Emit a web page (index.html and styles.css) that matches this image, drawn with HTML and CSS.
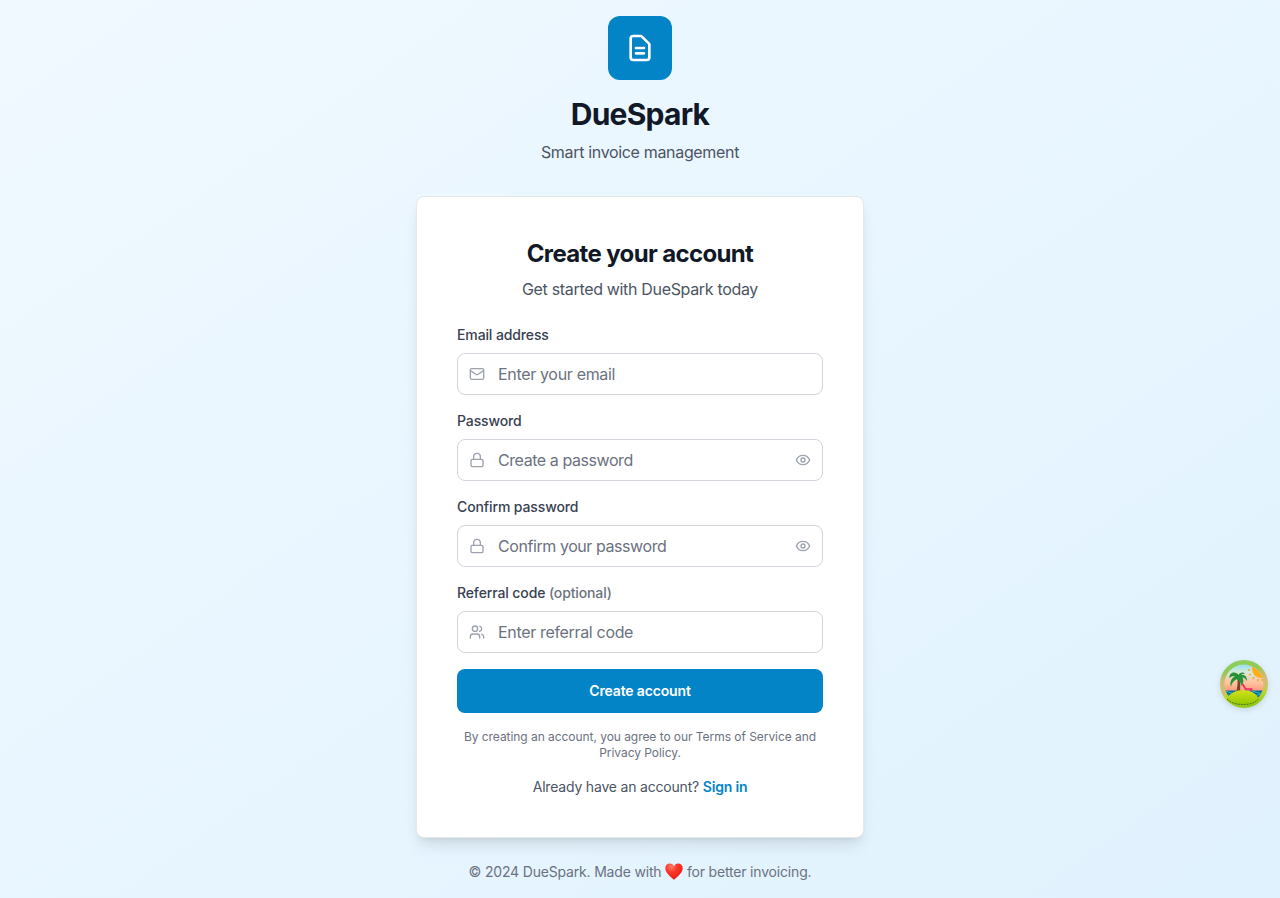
FILE: index.html
```html
<!DOCTYPE html>
<html lang="en">
<head>
<meta charset="utf-8">
<title>DueSpark</title>
<link rel="stylesheet" href="styles.css">
</head>
<body>
<main class="page">
  <header class="brand">
    <div class="logo">
      <svg class="logo-icon" viewBox="0 0 24 24"><path d="M9 12h6m-6 4h6m2 5H7a2 2 0 01-2-2V5a2 2 0 012-2h5.586a1 1 0 01.707.293l5.414 5.414a1 1 0 01.293.707V19a2 2 0 01-2 2z"/></svg>
    </div>
    <h1 class="brand-name">DueSpark</h1>
    <p class="tagline">Smart invoice management</p>
  </header>

  <section class="card">
    <h2 class="title">Create your account</h2>
    <p class="subtitle">Get started with DueSpark today</p>
    <form class="form">
      <div class="field">
        <label class="label" for="email">Email address</label>
        <div class="control">
          <svg class="icon" viewBox="0 0 24 24"><rect x="2" y="4" width="20" height="16" rx="2"/><path d="m22 7-8.97 5.7a1.94 1.94 0 0 1-2.06 0L2 7"/></svg>
          <input class="input" id="email" type="email" placeholder="Enter your email">
        </div>
      </div>
      <div class="field">
        <label class="label" for="password">Password</label>
        <div class="control">
          <svg class="icon" viewBox="0 0 24 24"><rect x="3" y="11" width="18" height="11" rx="2"/><path d="M7 11V7a5 5 0 0 1 10 0v4"/></svg>
          <input class="input input-secret" id="password" type="password" placeholder="Create a password">
          <svg class="icon" viewBox="0 0 24 24"><path d="M2 12s3-7 10-7 10 7 10 7-3 7-10 7-10-7-10-7Z"/><circle cx="12" cy="12" r="3"/></svg>
        </div>
      </div>
      <div class="field">
        <label class="label" for="confirm">Confirm password</label>
        <div class="control">
          <svg class="icon" viewBox="0 0 24 24"><rect x="3" y="11" width="18" height="11" rx="2"/><path d="M7 11V7a5 5 0 0 1 10 0v4"/></svg>
          <input class="input input-secret" id="confirm" type="password" placeholder="Confirm your password">
          <svg class="icon" viewBox="0 0 24 24"><path d="M2 12s3-7 10-7 10 7 10 7-3 7-10 7-10-7-10-7Z"/><circle cx="12" cy="12" r="3"/></svg>
        </div>
      </div>
      <div class="field">
        <label class="label" for="referral">Referral code <span class="optional">(optional)</span></label>
        <div class="control">
          <svg class="icon" viewBox="0 0 24 24"><path d="M16 21v-2a4 4 0 0 0-4-4H6a4 4 0 0 0-4 4v2"/><circle cx="9" cy="7" r="4"/><path d="M22 21v-2a4 4 0 0 0-3-3.87M16 3.13a4 4 0 0 1 0 7.75"/></svg>
          <input class="input" id="referral" type="text" placeholder="Enter referral code">
        </div>
      </div>
      <button class="submit" type="button">Create account</button>
      <p class="terms">By creating an account, you agree to our Terms of Service and<br>Privacy Policy.</p>
      <p class="signin">Already have an account? <a class="link">Sign in</a></p>
    </form>
  </section>

  <footer class="footer">© 2024 DueSpark. Made with <svg class="heart" viewBox="0 0 18 17"><defs><radialGradient id="heartFill" cx=".35" cy=".2" r=".9"><stop offset="0" stop-color="#ff7a66"/><stop offset=".4" stop-color="#fb3527"/><stop offset="1" stop-color="#e31b12"/></radialGradient></defs><path d="M9 16.8C6 14 .3 10.300.3 5.300C.3 2.300 2.300.4 4.800.4C6.800.4 8.300 1.500 9 3.200C9.700 1.500 11.200.4 13.200.4C15.700.4 17.700 2.300 17.700 5.300C17.700 10.300 12 14 9 16.800Z" fill="url(#heartFill)"/></svg> for better invoicing.</footer>
</main>

<button class="devtools" type="button" aria-label="Open devtools">
  <svg class="island" viewBox="0 0 48 48">
    <defs>
      <linearGradient id="ring" x1=".35" y1="0" x2=".5" y2="1"><stop offset="0" stop-color="#8fcf5a"/><stop offset=".2" stop-color="#8fca55"/><stop offset=".42" stop-color="#d9b878"/><stop offset=".6" stop-color="#cfc06a"/><stop offset=".75" stop-color="#b6d62a"/><stop offset="1" stop-color="#8cc61c"/></linearGradient>
      <linearGradient id="sky" x1="0" y1="0" x2="0" y2="1"><stop offset="0" stop-color="#74d9ee"/><stop offset=".25" stop-color="#d5eadd"/><stop offset=".48" stop-color="#ffc29c"/><stop offset=".75" stop-color="#ff806c"/></linearGradient>
      <linearGradient id="hill" x1="0" y1="0" x2="0" y2="1"><stop offset="0" stop-color="#d3e21b"/><stop offset="1" stop-color="#93c800"/></linearGradient>
      <clipPath id="disc"><circle cx="24" cy="24" r="19.500"/></clipPath>
    </defs>
    <circle cx="24" cy="24" r="24" fill="url(#ring)"/>
    <g clip-path="url(#disc)">
      <path d="M0 0h48v48H0z" fill="url(#sky)"/>
      <path d="M0 30.500h48V48H0z" fill="#086d91"/>
      <path d="M4 32.500q3-2 6 0t6 0M31 32.500q3-2 6 0t7 0M4 35.500q3-2 6 0M36 35.500q3-2 7 0" fill="none" stroke="#31b7ce"/>
      <path d="M0 38h48v10H0z" fill="#9fce1c"/>
      <circle cx="41" cy="9" r="9" fill="#ffad16"/>
      <path d="M31 6l-2-1M30 10h-2M31 14l-2 1M34 17l-1 2M38 19v2.500M42 19l.500 2" stroke="#f9a51a" stroke-width="1.300"/>
    </g>
    <path d="M18 15c2.500 6 2.500 11 2 16h-3.500c1.500-7 1.500-11 0-16z" fill="#804126"/>
    <path d="M17.500 16C14 11 10 12 9 18c2-1.500 4-2 6-1.500-4 2-5.500 6-4 10 1-4 3-6 6-7.500 3 2 4 4 4 7 3-3 3-7 1-8.500 2 0 3.500 1 5 3.500 0-5-3-7-6-5.500 1-1.500 3-2 4.500-2-3-2-6-1-7 1.500-1-2-4-3-7-2 3 0 5 1.500 6 3z" fill="#249236"/>
    <path d="M22.500 24l3 5h7M26 29v2m5-2v2" fill="none" stroke="#e92b68" stroke-width="1.700"/>
    <path d="M7 39C9 33 17 30 23 30S37 33 38.500 39C34 44 28 44.500 23 44.500S12 44 7 39z" fill="url(#hill)"/>
    <path d="M7 39c5 5 11 5.500 16 5.500s11-.5 15.500-5.500" fill="none" stroke="#3f6b18" stroke-width=".9" stroke-dasharray="2 1"/>
  </svg>
</button>
</body>
</html>
```

FILE: styles.css
```css
* { box-sizing: border-box; }
body, h1, h2, p { margin: 0; }
body {
  font-family: Inter, "Liberation Sans", sans-serif;
  color: #111827;
}
.page {
  min-height: 898px;
  padding: 16px;
  display: flex;
  flex-direction: column;
  align-items: center;
  background: linear-gradient(to bottom right, #f0f9ff, #e0f2fe);
}
.brand { display: flex; flex-direction: column; align-items: center; margin-bottom: 32px; }
.logo {
  width: 64px;
  height: 64px;
  display: grid;
  place-items: center;
  border-radius: 12px;
  background: #0284c7;
  margin-bottom: 16px;
}
.logo-icon { width: 32px; height: 32px; fill: none; stroke: #fff; stroke-width: 2; stroke-linecap: round; stroke-linejoin: round; }
.brand-name { font-size: 30px; line-height: 36px; font-weight: 700; letter-spacing: -0.78px; }
.tagline, .subtitle { margin-top: 8px; font-size: 16px; line-height: 24px; color: #4b5563; letter-spacing: -0.33px; }
.card {
  width: 448px;
  padding: 40px;
  border: 1px solid #e5e7eb;
  border-radius: 8px;
  background: #fff;
  box-shadow: 0 10px 15px -3px rgba(0, 0, 0, .1), 0 4px 6px -4px rgba(0, 0, 0, .1);
  text-align: center;
}
.title { padding-top: 1px; font-size: 24px; line-height: 32px; font-weight: 700; letter-spacing: -0.64px; }
.title + .subtitle { margin-top: 7px; }
.form { margin-top: 24px; display: flex; flex-direction: column; gap: 16px; }
.field { display: flex; flex-direction: column; gap: 8px; text-align: left; }
.label { font-size: 14px; line-height: 20px; font-weight: 500; color: #374151; letter-spacing: -0.12px; }
.optional { color: #6b7280; }
.control {
  height: 42px;
  padding: 0 11px;
  display: flex;
  align-items: center;
  gap: 13px;
  border: 1px solid #d1d5db;
  border-radius: 8px;
}
.icon { flex: none; width: 16px; height: 16px; fill: none; stroke: #9ca3af; stroke-width: 2; stroke-linecap: round; stroke-linejoin: round; }
.input {
  flex: 1;
  min-width: 0;
  height: 24px;
  padding: 0;
  border: 0;
  outline: 0;
  background: none;
  font: 16px/24px Inter, "Liberation Sans", sans-serif;
  letter-spacing: -0.33px;
}
.input-secret { letter-spacing: -0.43px; }
.input::placeholder { color: #6b7280; opacity: 1; }
.submit {
  height: 44px;
  border: 0;
  border-radius: 8px;
  background: #0284c7;
  color: #fff;
  font: 600 14px/20px Inter, "Liberation Sans", sans-serif;
  letter-spacing: -0.15px;
}
.terms { font-size: 12px; line-height: 16px; color: #6b7280; letter-spacing: -0.05px; }
.signin { font-size: 14px; line-height: 20px; color: #4b5563; letter-spacing: -0.19px; }
.link { color: #0284c7; font-weight: 600; }
.footer { margin-top: 24px; font-size: 14px; line-height: 20px; color: #6b7280; white-space: nowrap; letter-spacing: -0.18px; }
.heart { width: 18px; height: 17px; vertical-align: -3px; }
.devtools {
  position: fixed;
  right: 12px;
  top: 660px;
  width: 48px;
  height: 48px;
  padding: 0;
  border: 0;
  border-radius: 50%;
  background: none;
  box-shadow: 0 2px 6px rgba(0, 0, 0, .12);
}
.island { display: block; width: 48px; height: 48px; }
```
